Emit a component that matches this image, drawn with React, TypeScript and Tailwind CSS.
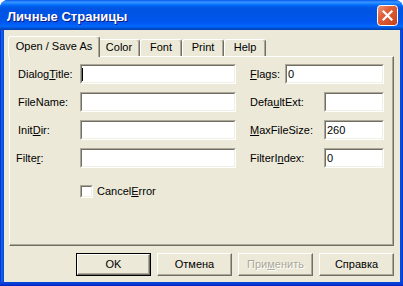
import React from "react";

function Field({ w, children }: { w: string; children?: React.ReactNode }) {
  return (
    <div
      className={`h-[20px] shrink-0 border-t border-l border-b border-r border-t-[#ACA899] border-l-[#ACA899] border-b-white border-r-white ${w}`}
    >
      <div className="h-full flex items-center bg-white border-t border-l border-b border-r border-t-[#716F64] border-l-[#716F64] border-b-[#F1EFE2] border-r-[#F1EFE2]">
        {children}
      </div>
    </div>
  );
}

function Tab({ label, selected, w }: { label: string; selected?: boolean; w: string }) {
  if (selected) {
    return (
      <div
        className={`relative z-10 -mx-[2px] -mb-[1px] h-[21px] ${w} bg-[#ECE9D8] border-t border-l border-r border-t-white border-l-white border-r-[#716F64] rounded-t-[3px] shadow-[inset_-1px_0_0_#ACA899] pt-[3px] text-center whitespace-nowrap`}
      >
        {label}
      </div>
    );
  }
  return (
    <div
      className={`h-[17px] ${w} bg-[#ECE9D8] border-t border-l border-r border-t-white border-l-white border-r-[#716F64] rounded-t-[3px] shadow-[inset_-1px_0_0_#ACA899] pt-[1px] text-center whitespace-nowrap`}
    >
      {label}
    </div>
  );
}

function Btn({ children, def, disabled }: { children: React.ReactNode; def?: boolean; disabled?: boolean }) {
  const inner = (
    <div
      className={`flex-1 h-full flex items-center justify-center border-t border-l border-b border-r border-t-white border-l-white border-b-[#716F64] border-r-[#716F64] shadow-[inset_-1px_-1px_0_#ACA899] ${
        disabled ? "text-[#ACA899] [text-shadow:1px_1px_0_#ffffff]" : "text-black"
      }`}
    >
      {children}
    </div>
  );
  if (def) {
    return <div className="w-[75px] h-[23px] flex border border-black">{inner}</div>;
  }
  return <div className="w-[75px] h-[23px] flex">{inner}</div>;
}

function CloseButton() {
  return (
    <svg width="21" height="21" viewBox="0 0 21 21">
      <defs>
        <linearGradient id="cg" x1="0" y1="0" x2="1" y2="1">
          <stop offset="0" stopColor="#f09a7c" />
          <stop offset="0.35" stopColor="#e2613a" />
          <stop offset="1" stopColor="#c6401a" />
        </linearGradient>
      </defs>
      <rect x="0.5" y="0.5" width="20" height="20" rx="3" ry="3" fill="url(#cg)" stroke="#ffffff" strokeWidth="1" />
      <path d="M6.5 6.5 L14.5 14.5 M14.5 6.5 L6.5 14.5" stroke="#ffffff" strokeWidth="2.2" strokeLinecap="square" />
    </svg>
  );
}

export default function App() {
  return (
    <div className="w-[403px] h-[286px] bg-white font-['Liberation_Sans',Arial,sans-serif] text-[11px] leading-[13px] text-black">
      <div className="w-[403px] h-[286px] flex flex-col rounded-t-[8px] overflow-hidden bg-[#0055e5]">
        {/* Title bar */}
        <div className="h-[30px] shrink-0 flex items-start justify-between pl-[7px] pr-[5px] bg-[linear-gradient(to_bottom,#0058ee_0px,#3a93ff_2px,#288eff_3px,#127dff_4px,#036ffc_5px,#0262ee_6px,#0057e5_8px,#0054e3_10px,#0055eb_20px,#005bf5_24px,#026afe_26px,#0062ef_27px,#0052d6_28px,#0040ab_30px)]">
          <span className="pt-[10px] text-white font-bold text-[13px] leading-[13px] [text-shadow:1px_1px_0_#0a1883]">
            Личные Страницы
          </span>
          <div className="pt-[5px]">
            <CloseButton />
          </div>
        </div>
        {/* Body */}
        <div className="flex flex-1 min-h-0">
          <div className="w-[4px] bg-[linear-gradient(to_right,#0831d9_0px,#0831d9_1px,#166aee_1px,#0855dd_3px,#0047d0_4px)]" />
          <div className="flex-1 bg-[#ECE9D8] flex flex-col pt-[6px] pl-[5px] pr-[6px]">
            {/* Tabs */}
            <div className="flex items-end h-[20px] pl-[1px]">
              <Tab label="Open / Save As" selected w="w-[92px]" />
              <Tab label="Color" w="w-[42px]" />
              <Tab label="Font" w="w-[42px]" />
              <Tab label="Print" w="w-[42px]" />
              <Tab label="Help" w="w-[42px]" />
            </div>
            {/* Panel */}
            <div className="h-[190px] border-t border-l border-b border-r border-t-white border-l-white border-b-[#716F64] border-r-[#716F64] shadow-[inset_-1px_-1px_0_#ACA899] pt-[7px] pl-[8px]">
              <div className="flex flex-col gap-[8px]">
                <div className="flex items-center h-[20px]">
                  <div className="w-[62px]">
                    Dialog<u>T</u>itle:
                  </div>
                  <Field w="w-[156px]">
                    <span className="w-[1px] h-[13px] bg-black" />
                  </Field>
                  <div className="w-[14px]" />
                  <div className="w-[35px]">
                    <u>F</u>lags:
                  </div>
                  <Field w="w-[99px]">
                    <span className="pl-[1px]">0</span>
                  </Field>
                </div>
                <div className="flex items-center h-[20px]">
                  <div className="w-[62px]">FileName:</div>
                  <Field w="w-[156px]" />
                  <div className="w-[14px]" />
                  <div className="w-[74px]">
                    Defa<u>u</u>ltExt:
                  </div>
                  <Field w="w-[60px]" />
                </div>
                <div className="flex items-center h-[20px]">
                  <div className="w-[62px]">
                    Init<u>D</u>ir:
                  </div>
                  <Field w="w-[156px]" />
                  <div className="w-[14px]" />
                  <div className="w-[74px]">
                    <u>M</u>axFileSize:
                  </div>
                  <Field w="w-[60px]">
                    <span className="pl-[1px]">260</span>
                  </Field>
                </div>
                <div className="flex items-center h-[20px]">
                  <div className="w-[64px] -ml-[2px]">
                    Filte<u>r</u>:
                  </div>
                  <Field w="w-[156px]" />
                  <div className="w-[14px]" />
                  <div className="w-[74px]">
                    FilterI<u>n</u>dex:
                  </div>
                  <Field w="w-[60px]">
                    <span className="pl-[1px]">0</span>
                  </Field>
                </div>
              </div>
              <div className="flex items-center mt-[17px] pl-[62px] h-[13px]">
                <div className="w-[13px] h-[13px] border-t border-l border-b border-r border-t-[#ACA899] border-l-[#ACA899] border-b-white border-r-white">
                  <div className="w-full h-full bg-white border-t border-l border-b border-r border-t-[#716F64] border-l-[#716F64] border-b-[#F1EFE2] border-r-[#F1EFE2]" />
                </div>
                <span className="ml-[4px]">
                  Cancel<u>E</u>rror
                </span>
              </div>
            </div>
            {/* Buttons */}
            <div className="flex justify-end gap-[6px] mt-[7px] pr-[0px]">
              <Btn def>OK</Btn>
              <Btn>Отмена</Btn>
              <Btn disabled>
                При<u>м</u>енить
              </Btn>
              <Btn>Справка</Btn>
            </div>
          </div>
          <div className="w-[3px] bg-[linear-gradient(to_right,#0047d0_0px,#0855dd_1px,#0831d9_3px)]" />
        </div>
        <div className="h-[4px] shrink-0 bg-[linear-gradient(to_bottom,#0047d0_0px,#0844d6_1px,#0831d9_3px,#001ea0_4px)]" />
      </div>
    </div>
  );
}
